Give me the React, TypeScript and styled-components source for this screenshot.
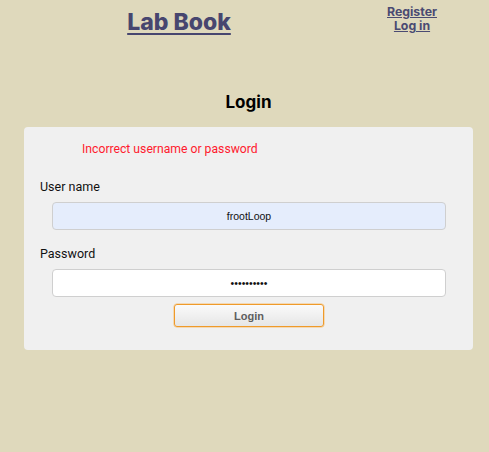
import React from "react";
import styled, { createGlobalStyle } from "styled-components";

const Global = createGlobalStyle`
  html, body { margin: 0; padding: 0; }
  body {
    background: #dfd9bc;
    font-family: Roboto, "Liberation Sans", sans-serif;
    width: 489px;
    height: 452px;
    overflow: hidden;
  }
`;

const Header = styled.header`
  display: flex;
  align-items: flex-start;
  height: 60px;
`;

const TitleCell = styled.div`
  width: 358px;
  display: flex;
  justify-content: center;
  padding-top: 9px;
`;

const Title = styled.a`
  font-family: Inter, "Liberation Sans", sans-serif;
  font-weight: 800;
  font-size: 23px;
  line-height: 26px;
  color: #47466f;
  text-decoration: underline;
  text-underline-offset: 3px;
  text-decoration-thickness: 2px;
`;

const NavCell = styled.nav`
  width: 108px;
  display: flex;
  flex-direction: column;
  align-items: center;
  padding-top: 5px;
`;

const NavLink = styled.a`
  font-family: Inter, "Liberation Sans", sans-serif;
  font-weight: 700;
  font-size: 12.3px;
  line-height: 14px;
  color: #4a4a72;
  text-decoration: underline;
`;

const Main = styled.main`
  padding: 31px 16px 0 24px;
  display: flex;
  flex-direction: column;
  align-items: center;
`;

const Heading = styled.h1`
  font-family: Inter, "Liberation Sans", sans-serif;
  font-weight: 700;
  font-size: 17px;
  line-height: 22px;
  margin: 0 0 14px;
  color: #000;
`;

const Card = styled.form`
  box-sizing: border-box;
  width: 449px;
  height: 223px;
  background: #f0f0f0;
  border-radius: 4px;
  padding: 13px 16px 0 16px;
  display: flex;
  flex-direction: column;
`;

const ErrorText = styled.div`
  color: #ff1a2e;
  font-size: 12.2px;
  line-height: 18px;
  margin-left: 42px;
  margin-bottom: 21px;
`;

const Label = styled.label`
  font-size: 12.5px;
  line-height: 16px;
  color: #111;
  margin-bottom: 7px;
`;

const Input = styled.input<{ $filled?: boolean }>`
  box-sizing: border-box;
  width: 394px;
  height: 28px;
  margin-left: 12px;
  border: 1px solid #cfcfcf;
  border-radius: 4px;
  background: ${(p) => (p.$filled ? "#e5edfc" : "#ffffff")};
  font-family: "Liberation Sans", Arial, sans-serif;
  font-size: 10.5px;
  text-align: center;
  color: #111;
  outline: none;
  padding: 0;
`;

const Field = styled.div<{ $gap: number }>`
  display: flex;
  flex-direction: column;
  margin-bottom: ${(p) => p.$gap}px;
`;

const ButtonRow = styled.div`
  display: flex;
  justify-content: center;
  margin-left: 12px;
  width: 394px;
`;

const Button = styled.button`
  box-sizing: border-box;
  width: 150px;
  height: 23px;
  border: 1px solid #ef9a2a;
  border-radius: 3px;
  background: linear-gradient(#fafafa, #e6e6e6);
  box-shadow: 0 0 0 0.5px #f6c27a;
  font-family: "Liberation Sans", Arial, sans-serif;
  font-weight: 700;
  font-size: 11px;
  color: #5e5e5e;
  padding: 0;
`;

export default function App() {
  return (
    <>
      <Global />
      <Header>
        <TitleCell>
          <Title href="#">Lab Book</Title>
        </TitleCell>
        <NavCell>
          <NavLink href="#">Register</NavLink>
          <NavLink href="#">Log in</NavLink>
        </NavCell>
      </Header>
      <Main>
        <Heading>Login</Heading>
        <Card onSubmit={(e) => e.preventDefault()}>
          <ErrorText>Incorrect username or password</ErrorText>
          <Field $gap={16}>
            <Label>User name</Label>
            <Input $filled defaultValue="frootLoop" />
          </Field>
          <Field $gap={7}>
            <Label>Password</Label>
            <Input type="password" defaultValue="••••••••••" readOnly />
          </Field>
          <ButtonRow>
            <Button type="submit">Login</Button>
          </ButtonRow>
        </Card>
      </Main>
    </>
  );
}
